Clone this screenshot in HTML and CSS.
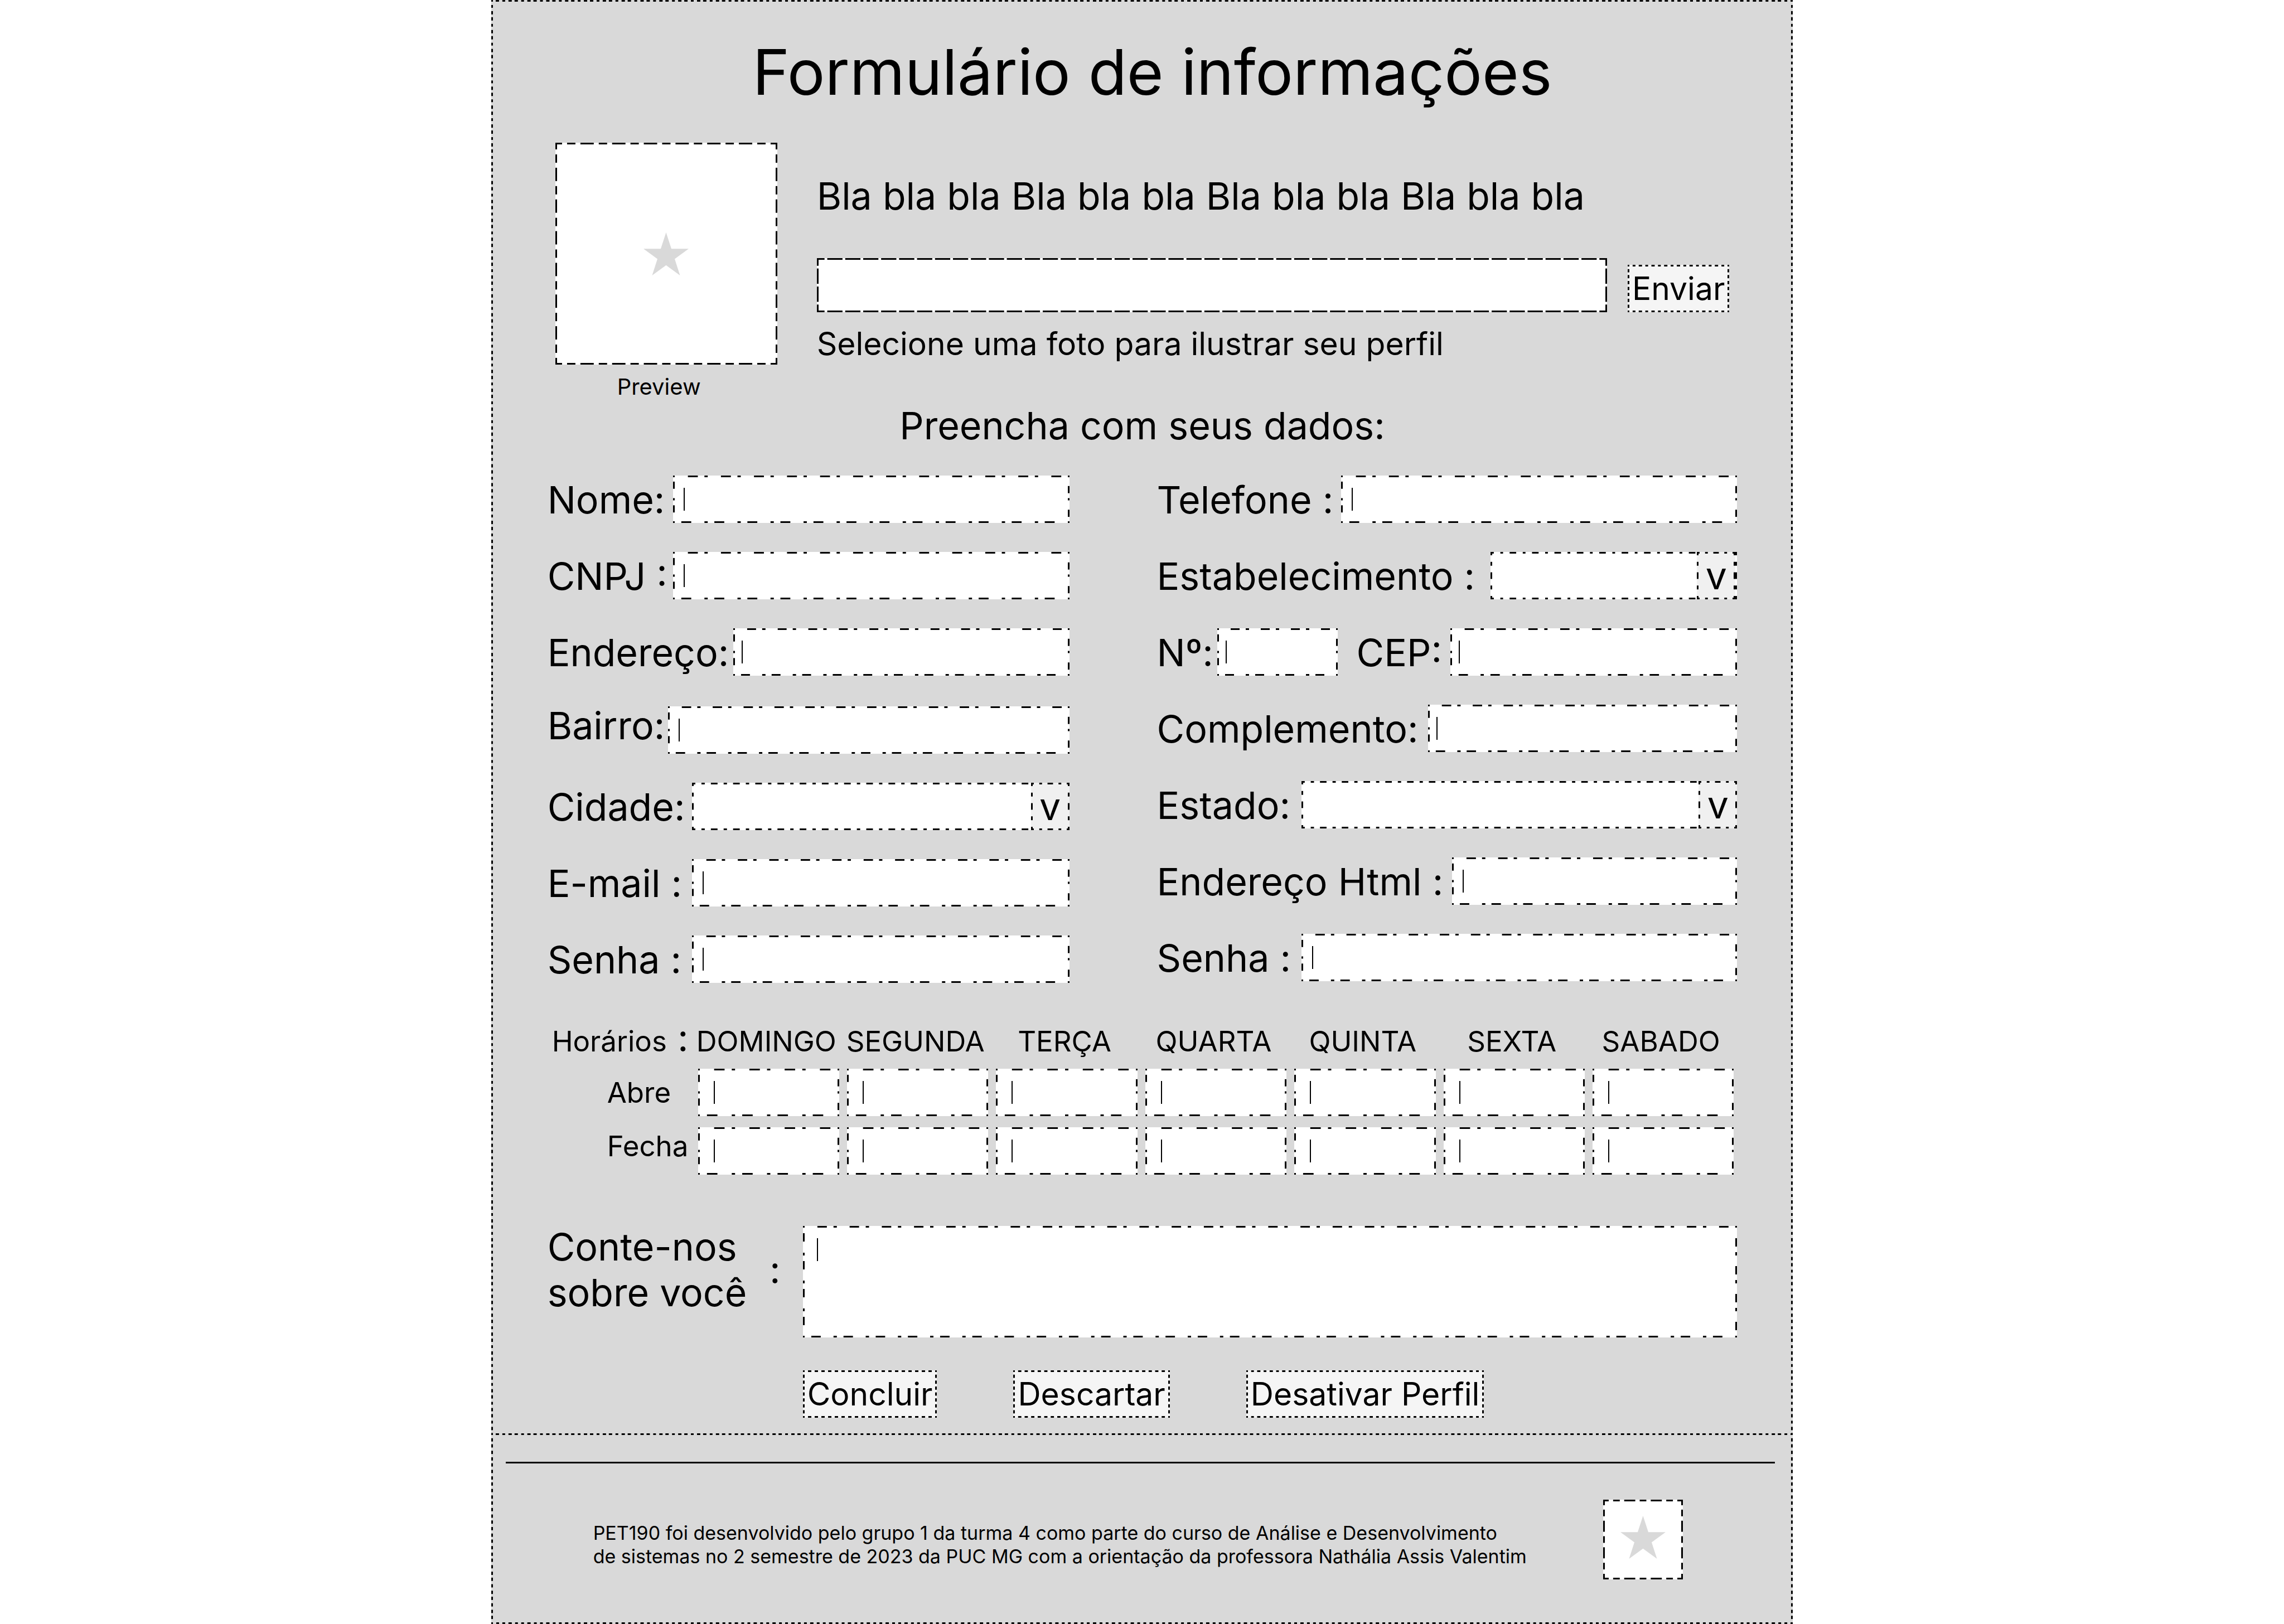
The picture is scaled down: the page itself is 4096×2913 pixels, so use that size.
FILE: index.html
```html
<!DOCTYPE html>
<html lang="pt-BR">
<head>
<meta charset="utf-8">
<meta name="viewport" content="width=device-width, initial-scale=1">
<title>Formulário de informações</title>
<link rel="stylesheet" href="styles.css">
</head>
<body>
<div class="page">
  <main class="panel dotted">
    <h1 class="title">Formulário de informações</h1>

    <section class="profile">
      <figure class="preview">
        <div class="picture picture-large">
          <svg class="star" viewBox="0 0 100 100" aria-hidden="true"><path d="M50 0 61.2 34.5 97.6 34.5 68.2 55.9 79.4 90.5 50 69.1 20.6 90.5 31.8 55.9 2.4 34.5 38.8 34.5Z"/></svg>
        </div>
        <figcaption class="caption">Preview</figcaption>
      </figure>
      <div class="upload">
        <p class="intro">Bla bla bla Bla bla bla Bla bla bla Bla bla bla</p>
        <div class="upload-row">
          <input class="file-box" id="foto" type="text">
          <button class="button dotted" type="button">Enviar</button>
        </div>
        <label class="hint" for="foto">Selecione uma foto para ilustrar seu perfil</label>
      </div>
    </section>

    <h2 class="subtitle">Preencha com seus dados:</h2>

    <form class="form">
      <div class="columns">
        <div class="column column-left">
          <div class="group">
            <div class="row"><label class="label w-name" for="nome">Nome:</label><input class="field" id="nome" type="text"></div>
            <div class="row"><label class="label w-name" for="cnpj">CNPJ :</label><input class="field" id="cnpj" type="text"></div>
            <div class="row"><label class="label w-address" for="endereco">Endereço:</label><input class="field field-tight" id="endereco" type="text"></div>
          </div>
          <div class="group">
            <div class="row row-top"><label class="label w-district" for="bairro">Bairro:</label><input class="field" id="bairro" type="text"></div>
            <div class="row"><label class="label w-short" for="cidade">Cidade:</label><div class="select"><select class="select-box" id="cidade"><option></option></select><span class="arrow" aria-hidden="true">v</span></div></div>
            <div class="row"><label class="label w-short" for="email">E-mail :</label><input class="field" id="email" type="email"></div>
            <div class="row"><label class="label w-short" for="senha">Senha :</label><input class="field" id="senha" type="password"></div>
          </div>
        </div>
        <div class="column">
          <div class="group">
            <div class="row"><label class="label w-phone" for="telefone">Telefone :</label><input class="field" id="telefone" type="tel"></div>
            <div class="row"><label class="label w-place" for="estabelecimento">Estabelecimento :</label><div class="select select-inset"><select class="select-box" id="estabelecimento"><option></option></select><span class="arrow" aria-hidden="true">v</span></div></div>
            <div class="row"><label class="label w-number" for="numero">Nº:</label><input class="field field-number field-tight" id="numero" type="text"><label class="label w-zip" for="cep">CEP:</label><input class="field field-tight" id="cep" type="text"></div>
            <div class="row"><label class="label w-extra" for="complemento">Complemento:</label><input class="field field-tight" id="complemento" type="text"></div>
            <div class="row"><label class="label w-short" for="estado">Estado:</label><div class="select"><select class="select-box" id="estado"><option></option></select><span class="arrow" aria-hidden="true">v</span></div></div>
            <div class="row"><label class="label w-url" for="html">Endereço Html :</label><input class="field" id="html" type="text"></div>
            <div class="row"><label class="label w-short" for="senha2">Senha :</label><input class="field" id="senha2" type="password"></div>
          </div>
        </div>
      </div>

      <table class="hours">
        <thead>
          <tr>
            <th class="hours-title" scope="col">Horários<span class="colon"> :</span></th>
            <th class="day" scope="col">DOMINGO</th>
            <th class="day" scope="col">SEGUNDA</th>
            <th class="day" scope="col">TERÇA</th>
            <th class="day" scope="col">QUARTA</th>
            <th class="day" scope="col">QUINTA</th>
            <th class="day" scope="col">SEXTA</th>
            <th class="day" scope="col">SABADO</th>
          </tr>
        </thead>
        <tbody>
          <tr>
            <th class="hours-row" scope="row">Abre</th>
            <td class="slot"><input class="field field-slot" type="text" aria-label="Abre domingo"></td>
            <td class="slot"><input class="field field-slot" type="text" aria-label="Abre segunda"></td>
            <td class="slot"><input class="field field-slot" type="text" aria-label="Abre terça"></td>
            <td class="slot"><input class="field field-slot" type="text" aria-label="Abre quarta"></td>
            <td class="slot"><input class="field field-slot" type="text" aria-label="Abre quinta"></td>
            <td class="slot"><input class="field field-slot" type="text" aria-label="Abre sexta"></td>
            <td class="slot"><input class="field field-slot" type="text" aria-label="Abre sabado"></td>
          </tr>
          <tr>
            <th class="hours-row hours-row-close" scope="row">Fecha</th>
            <td class="slot"><input class="field field-slot" type="text" aria-label="Fecha domingo"></td>
            <td class="slot"><input class="field field-slot" type="text" aria-label="Fecha segunda"></td>
            <td class="slot"><input class="field field-slot" type="text" aria-label="Fecha terça"></td>
            <td class="slot"><input class="field field-slot" type="text" aria-label="Fecha quarta"></td>
            <td class="slot"><input class="field field-slot" type="text" aria-label="Fecha quinta"></td>
            <td class="slot"><input class="field field-slot" type="text" aria-label="Fecha sexta"></td>
            <td class="slot"><input class="field field-slot" type="text" aria-label="Fecha sabado"></td>
          </tr>
        </tbody>
      </table>

      <div class="about">
        <label class="about-label" for="sobre"><span>Conte-nos<br>sobre você</span><span>:</span></label>
        <textarea class="field field-area" id="sobre"></textarea>
      </div>

      <div class="actions">
        <button class="button dotted" type="submit">Concluir</button>
        <button class="button dotted" type="reset">Descartar</button>
        <button class="button dotted" type="button">Desativar Perfil</button>
      </div>
    </form>
  </main>

  <footer class="footer dotted">
    <hr class="rule">
    <div class="credits">
      <p class="credits-text">PET190 foi desenvolvido pelo grupo 1 da turma 4 como parte do curso de Análise e Desenvolvimento<br>de sistemas no 2 semestre de 2023 da PUC MG com a orientação da professora Nathália Assis Valentim</p>
      <div class="picture picture-small">
        <svg class="star" viewBox="0 0 100 100" aria-hidden="true"><path d="M50 0 61.2 34.5 97.6 34.5 68.2 55.9 79.4 90.5 50 69.1 20.6 90.5 31.8 55.9 2.4 34.5 38.8 34.5Z"/></svg>
      </div>
    </div>
  </footer>
</div>
</body>
</html>
```
FILE: styles.css
```css
* {
  box-sizing: border-box;
}

body {
  margin: 0;
  background: #fff;
  color: #000;
  font-family: Inter, "Liberation Sans", sans-serif;
  font-size: 68px;
  line-height: 82px;
}

h1, h2, p, figure, hr {
  margin: 0;
}

button, input, select, textarea {
  margin: 0;
  border: 0;
  border-radius: 0;
  outline: 0;
  padding: 0;
  font: inherit;
  color: inherit;
  appearance: none;
}

/* Dashed outlines: one gradient tile per side, rounded to a whole count. */
.dotted,
.field,
.select-box,
.arrow,
.picture,
.file-box {
  --w: 3px;
  --pattern: #000 0 50%, transparent 50%;
  --px: 57px;
  --py: 57px;
  --caret-x: 0;
  --caret-w: 0;
  background-image:
    linear-gradient(#000, #000),
    linear-gradient(to right, var(--pattern)),
    linear-gradient(to left, var(--pattern)),
    linear-gradient(to top, var(--pattern)),
    linear-gradient(to bottom, var(--pattern));
  background-size:
    var(--caret-w) 41px,
    var(--px) var(--w),
    var(--px) var(--w),
    var(--w) var(--py),
    var(--w) var(--py);
  background-position: var(--caret-x) 22px, 0 0, 0 100%, 0 0, 100% 0;
  background-repeat: no-repeat, round no-repeat, round no-repeat, no-repeat round, no-repeat round;
}

.dotted {
  --px: 34px;
  --py: 34px;
  --pattern: #000 0 8.33%, transparent 8.33% 25%, #000 25% 41.67%, transparent 41.67% 58.33%, #000 58.33% 75%, transparent 75% 91.67%, #000 91.67%;
  background-color: #d9d9d9;
}

.field {
  --pattern: #000 0 5%, transparent 5% 45%, #000 45% 75%, transparent 75% 95%, #000 95%;
  --py: 48px;
  --caret-x: 19px;
  --caret-w: 2px;
  flex: 1;
  min-width: 0;
  height: 85px;
  padding: 0 19px;
  background-color: #fff;
}

.field-tight {
  --caret-x: 15px;
  padding: 0 15px;
}

.page {
  width: 57%;
  margin: 0 auto;
}

.panel {
  padding: 60px 100px 31px 101px;
}

.title {
  padding-left: 36px;
  font-size: 113px;
  line-height: 138px;
  font-weight: 400;
  text-align: center;
}

.profile {
  display: flex;
  gap: 71px;
  margin-top: 58px;
  padding: 0 14px;
}

.picture {
  --pattern: #000 0 21%, transparent 21% 37%, #000 37% 63%, transparent 63% 79%, #000 79%;
  display: flex;
  align-items: center;
  justify-content: center;
  background-color: #fff;
}

.picture-large {
  width: 398px;
  height: 398px;
  padding-top: 8px;
}

.picture-small {
  --px: 48px;
  --py: 48px;
  width: 143px;
  height: 143px;
}

.star {
  width: 85px;
  height: 85px;
  fill: #d9d9d9;
}

.caption {
  margin-top: 16px;
  padding-left: 111px;
  font-size: 40px;
  line-height: 48px;
}

.upload {
  flex: 1;
  padding-top: 54px;
}

.upload-row {
  display: flex;
  align-items: flex-end;
  gap: 37px;
  margin: 71px 0 22px;
}

.file-box {
  --pattern: #000 0 41%, transparent 41% 59%, #000 59%;
  --px: 32px;
  --py: 32px;
  flex: 1;
  min-width: 0;
  height: 97px;
  padding: 0 19px;
  background-color: #fff;
}

.hint {
  display: block;
  font-size: 57px;
  line-height: 69px;
}

.button {
  --px: 23px;
  --py: 23px;
  --pattern: #000 0 12.5%, transparent 12.5% 37.5%, #000 37.5% 62.5%, transparent 62.5% 87.5%, #000 87.5%;
  height: 85px;
  padding: 0 8px;
  background-color: #f5f5f5;
  font-size: 57px;
  line-height: 85px;
}

.subtitle {
  margin-top: 4px;
  font-size: 68px;
  line-height: 82px;
  font-weight: 400;
  text-align: center;
}

.columns {
  display: grid;
  grid-template-columns: minmax(0, 936fr) minmax(0, 1041fr);
  gap: 157px;
  margin-top: 49px;
}

.column-left .group + .group {
  margin-top: 55px;
}

.group {
  display: flex;
  flex-direction: column;
  gap: 52px;
}

.row {
  display: flex;
  align-items: center;
}

.row-top {
  align-items: flex-start;
}

.label {
  flex: none;
  line-height: 68px;
  white-space: nowrap;
}

.w-name { width: 225px; }
.w-address { width: 333px; }
.w-district { width: 216px; }
.w-short { width: 259px; }
.w-phone { width: 330px; }
.w-place { width: 598px; }
.w-number { width: 108px; }
.w-zip { width: 168px; }
.w-extra { width: 486px; }
.w-url { width: 529px; }

.field-number {
  flex: none;
  width: 216px;
  margin-right: 34px;
}

.select {
  position: relative;
  flex: 1;
  display: flex;
}

.select-box,
.arrow {
  --pattern: #000 0 14.3%, transparent 14.3% 42.9%, #000 42.9% 57.1%, transparent 57.1% 85.7%, #000 85.7%;
  --px: 40px;
  --py: 40px;
  height: 85px;
}

.select-box {
  width: 100%;
  background-color: #fff;
}

.arrow {
  position: absolute;
  top: 0;
  right: 0;
  width: 69px;
  background-color: #f0f0f0;
  line-height: 85px;
  text-align: center;
  pointer-events: none;
}

.select-inset .arrow {
  right: 3px;
}

.hours {
  width: calc(100% - 6px);
  margin-top: 74px;
  border-collapse: collapse;
  table-layout: fixed;
  font-size: 51px;
  line-height: 61px;
}

.hours th {
  font-weight: 400;
}

.hours-title {
  width: 256px;
  padding: 0 0 19px 8px;
  text-align: left;
  white-space: nowrap;
}

.colon {
  font-size: 68px;
  line-height: 0;
}

.day {
  padding: 0 0 19px 6px;
  text-align: center;
  white-space: nowrap;
}

.hours-row {
  padding: 0 0 20px 107px;
  text-align: left;
  vertical-align: middle;
}

.hours-row-close {
  line-height: 68px;
  vertical-align: top;
}

.slot {
  padding: 0 0 20px 14px;
}

.field-slot {
  --caret-x: 28px;
  display: block;
  width: 100%;
  padding: 0 28px;
}

.about {
  display: flex;
  align-items: flex-end;
  margin-top: 68px;
}

.about-label {
  display: flex;
  flex: none;
  align-items: center;
  justify-content: space-between;
  width: 458px;
  padding: 0 40px 40px 0;
}

.field-area {
  --caret-x: 25px;
  height: 200px;
  padding: 21px 25px;
  resize: none;
}

.actions {
  display: flex;
  gap: 137px;
  margin-top: 59px;
  padding-left: 458px;
}

.footer {
  margin-top: -3px;
  padding: 51px 32px 80px 26px;
}

.rule {
  height: 3px;
  border: 0;
  background: #000;
}

.credits {
  display: flex;
  align-items: center;
  justify-content: space-between;
  margin-top: 65px;
  padding: 0 165px 0 157px;
}

.credits-text {
  margin-top: 18px;
  font-size: 34px;
  line-height: 42px;
}
```
